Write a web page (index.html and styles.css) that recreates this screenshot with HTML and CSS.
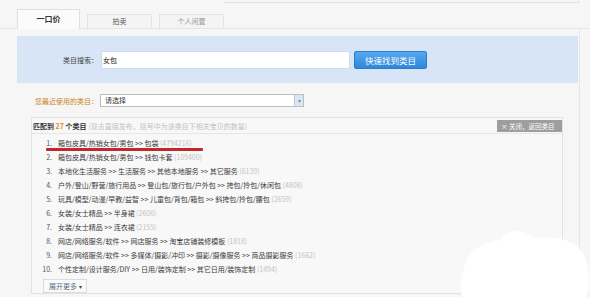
FILE: index.html
```html
<!DOCTYPE html>
<html lang="zh-CN">
<head>
<meta charset="utf-8">
<link rel="stylesheet" href="styles.css">
</head>
<body>
<div class="topline"></div>
<div class="tabs">
  <div class="tab active">一口价</div>
  <div class="tab">拍卖</div>
  <div class="tab light">个人闲置</div>
</div>
<div class="main">
  <div class="search-panel">
    <span class="search-label">类目搜索：</span>
    <div class="search-input">女包</div>
    <div class="search-btn">快速找到类目</div>
  </div>
  <div class="recent">
    <span class="recent-label">您最近使用的类目：</span>
    <div class="select"><span class="select-text">请选择</span><span class="select-arrow">▾</span></div>
  </div>
  <div class="results">
    <div class="results-head">
      <div class="head-text"><b>匹配到 <span class="num">27</span> 个类目</b><span class="hint">(双击直接发布，括号中为该类目下相关宝贝的数量)</span></div>
      <div class="close-btn">× 关闭，返回类目</div>
    </div>
    <ol class="list">
      <li class="item first"><span class="no">1.</span>箱包皮具/热销女包/男包 &gt;&gt; 包袋 <span class="cnt">(4794216)</span><span class="redline"></span></li>
      <li class="item"><span class="no">2.</span>箱包皮具/热销女包/男包 &gt;&gt; 钱包卡套 <span class="cnt">(109400)</span></li>
      <li class="item"><span class="no">3.</span>本地化生活服务 &gt;&gt; 生活服务 &gt;&gt; 其他本地服务 &gt;&gt; 其它服务 <span class="cnt">(6139)</span></li>
      <li class="item"><span class="no">4.</span>户外/登山/野营/旅行用品 &gt;&gt; 登山包/旅行包/户外包 &gt;&gt; 挎包/拎包/休闲包 <span class="cnt">(4808)</span></li>
      <li class="item"><span class="no">5.</span>玩具/模型/动漫/早教/益智 &gt;&gt; 儿童包/背包/箱包 &gt;&gt; 斜挎包/拎包/腰包 <span class="cnt">(2659)</span></li>
      <li class="item"><span class="no">6.</span>女装/女士精品 &gt;&gt; 半身裙 <span class="cnt">(2606)</span></li>
      <li class="item"><span class="no">7.</span>女装/女士精品 &gt;&gt; 连衣裙 <span class="cnt">(2155)</span></li>
      <li class="item"><span class="no">8.</span>网店/网络服务/软件 &gt;&gt; 网店服务 &gt;&gt; 淘宝店铺装修模板 <span class="cnt">(1818)</span></li>
      <li class="item"><span class="no">9.</span>网店/网络服务/软件 &gt;&gt; 多媒体/摄影/冲印 &gt;&gt; 摄影/摄像服务 &gt;&gt; 商品摄影服务 <span class="cnt">(1662)</span></li>
      <li class="item"><span class="no">10.</span>个性定制/设计服务/DIY &gt;&gt; 日用/装饰定制 &gt;&gt; 其它日用/装饰定制 <span class="cnt">(1494)</span></li>
    </ol>
    <div class="more-btn">展开更多 <span class="tri">▾</span></div>
  </div>
</div>
<svg class="blob" width="590" height="297" viewBox="0 0 590 297">
  <path d="M466 262 C470 248 488 242 500 240 C505 234 512 230 520 231 C528 232 530 238 536 238 C548 236 560 238 570 242 C580 246 586 256 588 268 C590 280 589 290 586 297 L462 297 C459 288 461 274 466 262 Z" fill="#ffffff"/>
</svg>
</body>
</html>
```
FILE: styles.css
```css
* { box-sizing: border-box; }
html, body { margin: 0; padding: 0; }
body {
  width: 590px;
  height: 297px;
  overflow: hidden;
  background: #f6f6f6;
  font-family: "Noto Sans CJK SC", "Noto Sans", sans-serif;
  color: #333;
  position: relative;
}
.topline {
  height: 3px;
  margin-left: 224px;
  width: 355px;
  border-bottom: 1px solid #e2e2e2;
  border-right: 1px solid #e2e2e2;
}
.tabs {
  display: flex;
  align-items: flex-end;
  gap: 7px;
  padding: 7px 0 0 17px;
  border-bottom: 1px solid #e6e6e6;
  height: 26px;
}
.tab {
  width: 65px;
  height: 14px;
  border: 1px solid #e3e3e3;
  border-bottom: none;
  background: #f4f4f4;
  font-size: 7px;
  line-height: 13px;
  text-align: center;
  color: #555;
}
.tab.light { color: #999; }
.tab.active {
  width: 63px;
  height: 20px;
  margin-bottom: -1px;
  background: #fbfbfb;
  border-color: #e0e0e0;
  font-size: 8px;
  font-weight: bold;
  line-height: 18px;
  color: #333;
}
.main {
  margin-left: 17px;
  width: 563px;
  height: 268px;
  border-right: 1px solid #e6e6e6;
  padding-top: 7px;
}
.search-panel {
  height: 47px;
  width: 561px;
  background: #d7e5f6;
  display: flex;
  align-items: center;
  padding-left: 46px;
  padding-top: 1px;
}
.search-label {
  font-size: 7px;
  width: 35px;
  color: #444;
}
.search-input {
  margin-left: 3px;
  width: 249px;
  height: 18px;
  background: #fff;
  border: 1px solid #cfdbea;
  font-size: 7px;
  line-height: 16px;
  padding-left: 1px;
  color: #222;
}
.search-btn {
  margin-left: 4px;
  width: 73px;
  height: 18px;
  background: linear-gradient(#55a9ef, #2f86db);
  border: 1px solid #2b7ccb;
  border-radius: 2px;
  color: #fff;
  font-size: 8.5px;
  line-height: 16px;
  text-align: center;
}
.recent {
  display: flex;
  align-items: center;
  margin-top: 11px;
  padding-left: 18px;
  height: 13px;
}
.recent-label {
  font-size: 7px;
  color: #c9861e;
  width: 65px;
}
.select {
  width: 204px;
  height: 13px;
  border: 1px solid #bdbdbd;
  background: #fff;
  display: flex;
  justify-content: space-between;
  align-items: stretch;
}
.select-text {
  font-size: 7px;
  line-height: 11px;
  padding-left: 4px;
  color: #333;
}
.select-arrow {
  width: 9px;
  background: #dbe6f3;
  border-left: 1px solid #b7c8dc;
  font-size: 6px;
  line-height: 11px;
  text-align: center;
  color: #6d8bb0;
}
.results {
  margin-top: 10px;
  margin-left: 14px;
  width: 532px;
  height: 177px;
  border: 1px solid #e2e2e2;
  background: #f8f8f8;
  position: relative;
}
.results-head {
  height: 16px;
  border-bottom: 1px solid #e6e6e6;
  display: flex;
  justify-content: space-between;
  align-items: center;
  padding-left: 1px;
}
.head-text {
  font-size: 7px;
  color: #333;
}
.head-text b { font-weight: bold; }
.num { color: #e18b1f; }
.hint {
  color: #c2c2c2;
  margin-left: 2px;
}
.close-btn {
  width: 65px;
  height: 12px;
  background: #9e9e9e;
  color: #fff;
  font-size: 6.5px;
  line-height: 12px;
  padding-left: 4px;
  margin-top: 1px;
}
.list {
  list-style: none;
  margin: 0;
  padding: 2px 0 0 0;
}
.item {
  font-size: 7px;
  line-height: 14px;
  height: 14px;
  color: #3a3a3a;
  white-space: nowrap;
  position: relative;
}
.no {
  display: inline-block;
  width: 20px;
  text-align: right;
  margin-right: 6px;
  color: #555;
}
.cnt { color: #c3c3c3; }
.redline {
  position: absolute;
  left: 14px;
  top: 12px;
  width: 157px;
  height: 2.5px;
  background: #c1272d;
  border-radius: 1px;
}
.more-btn {
  margin: 3px 0 0 11px;
  width: 44px;
  height: 14px;
  border: 1px solid #dcdcdc;
  background: #fafafa;
  font-size: 7px;
  line-height: 12px;
  color: #5a6e86;
  padding-left: 5px;
}
.tri { color: #444; font-size: 6px; }
.blob {
  position: absolute;
  left: 0;
  top: 0;
  pointer-events: none;
}
```
